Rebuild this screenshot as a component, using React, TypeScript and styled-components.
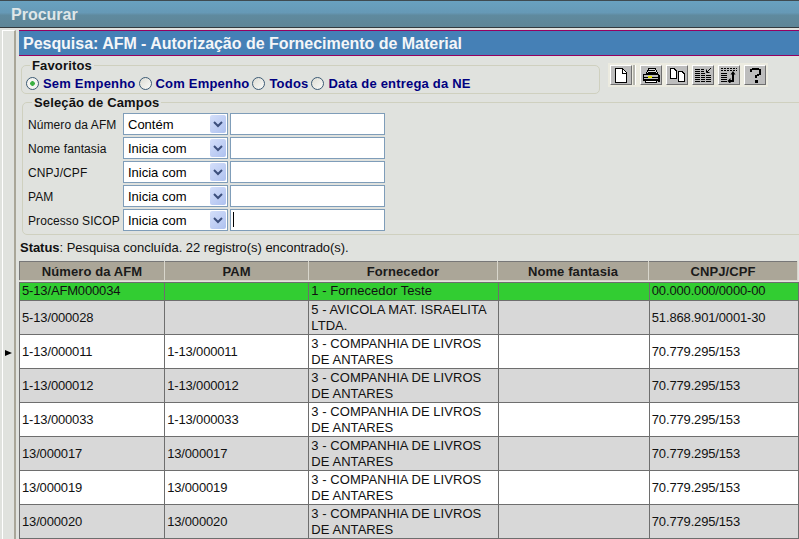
import React from 'react'
import styled, { createGlobalStyle } from 'styled-components'

const Global = createGlobalStyle`
  html, body { margin: 0; padding: 0; height: 539px; overflow: hidden; background: #e0e2de; }
  body, input, table { font-family: "Liberation Sans", Arial, sans-serif; font-size: 13px; color: #000; }
`

const Page = styled.div`
  width: 799px;
  height: 539px;
  overflow: hidden;
  display: flex;
  flex-direction: column;
`
const TopBar = styled.header`
  height: 26px;
  flex: none;
  border-top: 1px solid #3f4a50;
  border-bottom: 1px solid #333a3e;
  background: linear-gradient(#69a1c0 0, #6699b6 45%, #5f8a9e 55%, #5e8597 100%);
  color: #dfe6e8;
  font-size: 16px;
  font-weight: bold;
  line-height: 27px;
  padding-left: 11px;
`
const Body = styled.div`
  flex: 1;
  display: flex;
  min-height: 0;
`
const Rail = styled.aside`
  flex: none;
  width: 11px;
  margin: 2px 0 0 2px;
  border-top: 1px solid #fff;
  border-left: 1px solid #fff;
  border-right: 2px solid #a9a698;
  padding-top: 319px;
`
const Pointer = styled.div`
  width: 0;
  height: 0;
  margin-left: 2px;
  border-left: 7px solid #000;
  border-top: 3.5px solid transparent;
  border-bottom: 3.5px solid transparent;
`
const Main = styled.main`
  flex: 1;
  min-width: 0;
  margin-left: 3px;
  padding-top: 2px;
  display: flex;
  flex-direction: column;
`
const TitleBar = styled.h1`
  margin: 0;
  height: 24px;
  flex: none;
  border-top: 1px solid #960060;
  border-bottom: 1px solid #960060;
  background: #4580b6;
  color: #f4f6f8;
  font-size: 16px;
  font-weight: bold;
  line-height: 25px;
  letter-spacing: -0.03px;
  padding-left: 4px;
`
const FavRow = styled.div`
  display: flex;
  align-items: flex-start;
  height: 39px;
  flex: none;
`
const Group = styled.fieldset`
  margin: 0;
  padding: 0;
  border: 1px solid #cfd0bf;
  border-radius: 5px;
  min-width: 0;
`
const FavGroup = styled(Group)`
  margin: 2px 0 0 2px;
  width: 579px;
  height: 36px;
  box-sizing: border-box;
`
const FieldGroup = styled(Group)`
  margin: 0 -20px 0 3px;
  height: 140px;
  box-sizing: border-box;
  flex: none;
`
const Caption = styled.legend`
  font-size: 13px;
  font-weight: bold;
  color: #111;
  padding: 0 2px;
  margin-left: 8px;
  line-height: 15px;
  letter-spacing: 0.15px;
`
const FieldCaption = styled(Caption)`
  margin-left: 9px;
`
const Radios = styled.div`
  display: flex;
  align-items: center;
  padding: 3px 0 0 4px;
`
const Radio = styled.span<{ $on?: boolean }>`
  width: 13px;
  height: 13px;
  box-sizing: border-box;
  border-radius: 50%;
  border: 1px solid #3c5a74;
  background: ${p => (p.$on ? 'radial-gradient(circle, #3cb043 0 2px, #f4f4f0 2.6px)' : 'linear-gradient(135deg, #dcdcd4, #fbfbf8)')};
  margin-right: 4px;
`
const RadioLabel = styled.span`
  font-size: 13px;
  font-weight: bold;
  color: #000080;
  letter-spacing: 0.2px;
  margin-right: 3px;
`
const Toolbar = styled.div`
  margin: 7px 0 0 8px;
  height: 24px;
  width: 160px;
  box-sizing: border-box;
  padding: 2px;
  background: #ecebe0;
  display: flex;
  flex: none;
`
const ToolButton = styled.button<{ $gap?: number }>`
  width: 22px;
  height: 20px;
  padding: 0;
  margin-right: ${p => p.$gap ?? 4}px;
  box-sizing: border-box;
  background: #bdbdbd;
  border: 1px solid;
  border-color: #fff #6f6f6f #6f6f6f #fff;
  display: flex;
  align-items: center;
  justify-content: center;
  & svg { display: block; }
`
const Divider = styled.span`
  width: 2px;
  height: 20px;
  margin-right: 4px;
  background: #b5b5ad;
  border-right: 1px solid #fff;
  flex: none;
`
const Fields = styled.div`
  display: grid;
  grid-template-columns: 93px 105px 155px;
  grid-auto-rows: 22px;
  row-gap: 2px;
  column-gap: 2px;
  padding: 3px 0 0 5px;
  width: max-content;
`
const FieldLabel = styled.label`
  font-size: 12px;
  line-height: 24px;
  height: 22px;
  white-space: nowrap;
  color: #111;
  letter-spacing: 0.08px;
`
const Select = styled.div`
  height: 22px;
  box-sizing: border-box;
  border: 1px solid #7f9db9;
  background: #fff;
  display: flex;
  align-items: center;
  justify-content: space-between;
  padding: 0 1px 0 4px;
  font-size: 13px;
`
const Arrow = styled.span`
  width: 16px;
  height: 18px;
  border-radius: 2px;
  background: linear-gradient(135deg, #d4dffa, #aec1ef);
  display: flex;
  align-items: center;
  justify-content: center;
`
const TextInput = styled.div<{ $focus?: boolean }>`
  height: 22px;
  box-sizing: border-box;
  border: 1px solid #7f9db9;
  background: #fff;
  padding: 2px 0 0 1px;
  &::before {
    content: '';
    display: ${p => (p.$focus ? 'block' : 'none')};
    width: 1px;
    height: 15px;
    margin-left: 1px;
    background: #000;
  }
`
const Status = styled.div`
  margin: 6px 0 0 1px;
  height: 14px;
  line-height: 14px;
  font-size: 13px;
  letter-spacing: -0.04px;
  flex: none;
  color: #111;
`
const Grid = styled.table`
  border-collapse: collapse;
  table-layout: fixed;
  flex: none;
`
const HeadGrid = styled(Grid)`
  margin-top: 6px;
  width: 778px;
`
const RowsGrid = styled(Grid)`
  margin-top: 1px;
  width: 780px;
`
const HeadCell = styled.th`
  height: 18px;
  padding: 0;
  background: #aba698;
  border: 1px solid;
  border-color: #777 #d8d6cc #d8d6cc #777;
  font-size: 13px;
  font-weight: bold;
  color: #1a1a1a;
  letter-spacing: 0.1px;
  text-align: center;
`
const Row = styled.tr<{ $tone: 'green' | 'gray' | 'white' }>`
  background: ${p => (p.$tone === 'green' ? '#32cd32' : p.$tone === 'gray' ? '#d8d8d8' : '#fff')};
`
const Cell = styled.td<{ $slim?: boolean }>`
  border: 1px solid #6e6e6e;
  padding: 0 0 ${p => (p.$slim ? 1 : 0)}px 2px;
  font-size: 13px;
  line-height: 16px;
  letter-spacing: -0.15px;
  color: #111;
  vertical-align: middle;
  height: ${p => (p.$slim ? 16 : 33)}px;
`
const NameCell = styled(Cell)`
  padding-right: 6px;
  letter-spacing: 0.05px;
`

const ArrowIcon = () => (
  <svg width="10" height="7" viewBox="0 0 10 7"><path d="M1 1l4 4 4-4" fill="none" stroke="#3c4f7c" strokeWidth="2" /></svg>
)

const NewIcon = () => (
  <svg width="14" height="15" viewBox="0 0 14 15" shapeRendering="crispEdges">
    <path d="M1.5.5h7l4 4v10h-11z" fill="#fff" stroke="#000" />
    <path d="M8 1v4h4" fill="none" stroke="#000" />
  </svg>
)
const PrintIcon = () => (
  <svg width="17" height="15" viewBox="0 0 17 15" shapeRendering="crispEdges">
    <path d="M5.5.5h7l2 5h-11z" fill="#d8d8d8" stroke="#000" />
    <path d="M5 2h7M5 4h8" stroke="#000" />
    <path d="M.5 6.5h15v6h-15z" fill="#bdbdbd" stroke="#000" />
    <path d="M1 9h15M1 11h15" stroke="#000" />
    <path d="M5 8h4v2h-4z" fill="#e6e600" />
    <path d="M2.5 12.5h11v2h-11zM15 7h1v6h-1z" fill="#fff" stroke="#000" />
  </svg>
)
const CopyIcon = () => (
  <svg width="16" height="14" viewBox="0 0 16 14" shapeRendering="crispEdges">
    <path d="M1 .5h4l2 2v8H1z" fill="#fff" stroke="#000" />
    <path d="M9 3.5h4l2 2v8H9z" fill="#fff" stroke="#000" />
  </svg>
)
const ColumnsIcon = () => (
  <svg width="17" height="15" viewBox="0 0 17 15" shapeRendering="crispEdges">
    <path d="M0 1.500h9M0 3.500h9M0 5.500h10M0 7.500h16M0 9.500h16M0 11.500h16M0 13.500h16" stroke="#000" />
    <path d="M5.500 1v13M10.500 7v7" stroke="#bdbdbd" />
    <path d="M16 0l-4 4M11.500 1.500v3h3" fill="none" stroke="#000" shapeRendering="auto" />
  </svg>
)
const SortIcon = () => (
  <svg width="17" height="15" viewBox="0 0 17 15" shapeRendering="crispEdges">
    <path d="M0 .5h16M0 2.500h16" stroke="#000" strokeDasharray="2 1" />
    <path d="M0 5.500h6M0 7.500h6M0 9.500h6M0 11.500h6M0 13.500h6" stroke="#000" />
    <path d="M12 6v7H9" fill="none" stroke="#000" strokeWidth="2" />
    <path d="M9.500 6.500h5L12 3zM9.500 10v6L6.500 13z" fill="#000" shapeRendering="auto" />
  </svg>
)
const HelpIcon = () => (
  <svg width="11" height="15" viewBox="0 0 11 15" shapeRendering="crispEdges">
    <path d="M1 4V2l2-1h5l2 1v4L8 7 6 8v2" fill="none" stroke="#000" strokeWidth="2" />
    <path d="M4.500 12h3v3h-3z" fill="#000" />
  </svg>
)

type Tone = 'green' | 'gray' | 'white'
type Item = { afm: string; pam: string; name: string; doc: string; tone: Tone; slim?: boolean }

const livros = '3 - COMPANHIA DE LIVROS DE ANTARES'
const items: Item[] = [
  { afm: '5-13/AFM000034', pam: '', name: '1 - Fornecedor Teste', doc: '00.000.000/0000-00', tone: 'green', slim: true },
  { afm: '5-13/000028', pam: '', name: '5 - AVICOLA MAT. ISRAELITA LTDA.', doc: '51.868.901/0001-30', tone: 'gray' },
  { afm: '1-13/000011', pam: '1-13/000011', name: livros, doc: '70.779.295/153', tone: 'white' },
  { afm: '1-13/000012', pam: '1-13/000012', name: livros, doc: '70.779.295/153', tone: 'gray' },
  { afm: '1-13/000033', pam: '1-13/000033', name: livros, doc: '70.779.295/153', tone: 'white' },
  { afm: '13/000017', pam: '13/000017', name: livros, doc: '70.779.295/153', tone: 'gray' },
  { afm: '13/000019', pam: '13/000019', name: livros, doc: '70.779.295/153', tone: 'white' },
  { afm: '13/000020', pam: '13/000020', name: livros, doc: '70.779.295/153', tone: 'gray' },
  { afm: '', pam: '', name: '', doc: '', tone: 'white' },
]

const fields = [
  { label: 'Número da AFM', mode: 'Contém' },
  { label: 'Nome fantasia', mode: 'Inicia com' },
  { label: 'CNPJ/CPF', mode: 'Inicia com' },
  { label: 'PAM', mode: 'Inicia com' },
  { label: 'Processo SICOP', mode: 'Inicia com', focus: true },
]

const Cols = () => (
  <colgroup>
    <col width="145" />
    <col width="144" />
    <col width="189" />
    <col width="151" />
    <col width="149" />
  </colgroup>
)

const App = () => (
  <>
    <Global />
    <Page>
      <TopBar>Procurar</TopBar>
      <Body>
        <Rail><Pointer /></Rail>
        <Main>
          <TitleBar>Pesquisa: AFM - Autorização de Fornecimento de Material</TitleBar>
          <FavRow>
            <FavGroup>
              <Caption>Favoritos</Caption>
              <Radios>
                <Radio $on /><RadioLabel>Sem Empenho</RadioLabel>
                <Radio /><RadioLabel>Com Empenho</RadioLabel>
                <Radio /><RadioLabel>Todos</RadioLabel>
                <Radio /><RadioLabel>Data de entrega da NE</RadioLabel>
              </Radios>
            </FavGroup>
            <Toolbar>
              <ToolButton $gap={1}><NewIcon /></ToolButton>
              <Divider />
              <ToolButton><PrintIcon /></ToolButton>
              <ToolButton><CopyIcon /></ToolButton>
              <ToolButton><ColumnsIcon /></ToolButton>
              <ToolButton><SortIcon /></ToolButton>
              <ToolButton $gap={0}><HelpIcon /></ToolButton>
            </Toolbar>
          </FavRow>
          <FieldGroup>
            <FieldCaption>Seleção de Campos</FieldCaption>
            <Fields>
              {fields.map(f => (
                <React.Fragment key={f.label}>
                  <FieldLabel>{f.label}</FieldLabel>
                  <Select>{f.mode}<Arrow><ArrowIcon /></Arrow></Select>
                  <TextInput $focus={f.focus} />
                </React.Fragment>
              ))}
            </Fields>
          </FieldGroup>
          <Status><b>Status</b>: Pesquisa concluída. 22 registro(s) encontrado(s).</Status>
          <HeadGrid>
            <Cols />
            <thead>
              <tr>
                <HeadCell>Número da AFM</HeadCell>
                <HeadCell>PAM</HeadCell>
                <HeadCell>Fornecedor</HeadCell>
                <HeadCell>Nome fantasia</HeadCell>
                <HeadCell>CNPJ/CPF</HeadCell>
              </tr>
            </thead>
          </HeadGrid>
          <RowsGrid>
            <Cols />
            <tbody>
              {items.map((it, i) => (
                <Row key={i} $tone={it.tone}>
                  <Cell $slim={it.slim}>{it.afm}</Cell>
                  <Cell $slim={it.slim}>{it.pam}</Cell>
                  <NameCell $slim={it.slim}>{it.name}</NameCell>
                  <Cell $slim={it.slim}></Cell>
                  <Cell $slim={it.slim}>{it.doc}</Cell>
                </Row>
              ))}
            </tbody>
          </RowsGrid>
        </Main>
      </Body>
    </Page>
  </>
)

export default App
